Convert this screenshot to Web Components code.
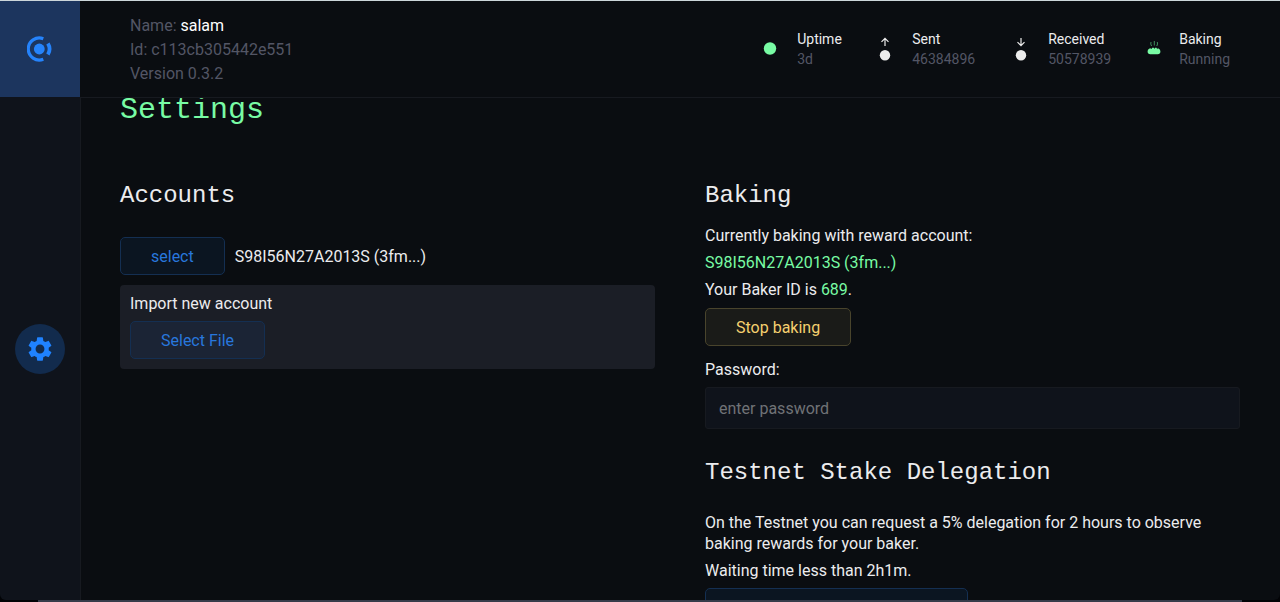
<!DOCTYPE html>
<html lang="en">
<head>
<meta charset="utf-8">
<meta name="viewport" content="width=device-width, initial-scale=1">
<title>Settings</title>
<style>
  :root {
    --bg: #0a0d11;
    --panel: #0f131b;
    --line: #171a20;
    --text: #ececee;
    --muted: #535665;
    --green: #78fba4;
    --blue: #1f82ff;
    --sans: Roboto, "Noto Sans", sans-serif;
    --mono: "Liberation Mono", monospace;
  }
  html { background: #020306; }
  body {
    margin: 0;
    color: var(--text);
    font: 16px/21px var(--sans);
  }
</style>
</head>
<body>
<baker-app>
  <side-bar slot="side"></side-bar>
  <node-header slot="header">
    <node-info name="salam" node-id="c113cb305442e551" version="0.3.2"></node-info>
    <node-stat slot="stats" label="Uptime" value="3d" icon="dot"></node-stat>
    <node-stat slot="stats" label="Sent" value="46384896" icon="up" wide></node-stat>
    <node-stat slot="stats" label="Received" value="50578939" icon="down" wide></node-stat>
    <node-stat slot="stats" label="Baking" value="Running" icon="bread"></node-stat>
  </node-header>
  <settings-page>
    <accounts-panel slot="left"></accounts-panel>
    <baking-panel slot="right"></baking-panel>
    <delegation-panel slot="right"></delegation-panel>
  </settings-page>
</baker-app>

<script>
  function define(name, render) {
    customElements.define(name, class extends HTMLElement {
      constructor() {
        super();
        this.attachShadow({ mode: "open" });
      }
      connectedCallback() {
        const t = document.createElement("template");
        t.innerHTML = render(this);
        this.shadowRoot.replaceChildren(t.content.cloneNode(true));
      }
    });
  }

  const headings = `
    h2 { margin: 0; font: 24px/34px var(--mono); }
    p { margin: 0; }
    .green { color: var(--green); }
  `;

  define("baker-app", () => `
    <style>
      :host { display: flex; flex-direction: column; height: 100vh; }
      .window {
        flex: 1; min-height: 0; overflow: hidden;
        display: grid; grid-template: auto minmax(0, 1fr) / 80px minmax(0, 1fr);
        border-top: 1px solid #ccd6da; border-radius: 0 0 6px 6px;
        background: var(--bg);
      }
      .edge { height: 2px; margin: 0 38px; background: #363c4a; }
      ::slotted([slot="side"]) { grid-row: 1 / 3; }
    </style>
    <div class="window"><slot name="side"></slot><slot name="header"></slot><slot></slot></div>
    <div class="edge"></div>
  `);

  define("side-bar", () => `
    <style>
      :host { display: flex; flex-direction: column; background: var(--panel); }
      .logo {
        display: grid; place-items: center;
        height: 96px; background: #1c355e;
      }
      nav { flex: 1; display: grid; place-items: center; }
      .item {
        display: grid; place-items: center;
        width: 50px; height: 50px; border-radius: 50%; background: #122b4d;
      }
      svg { display: block; }
    </style>
    <a class="logo" href="#" aria-label="Home">
      <svg width="26" height="26" viewBox="0.700 0 26 26" fill="none" stroke="#2583fb">
        <circle cx="13" cy="13" r="5.400" fill="#2583fb" stroke="none"/>
        <path d="M17 2.760A11 11 0 1 0 17 23.240" stroke-width="3.200"/>
        <path d="M21.600 7.500A10.500 10.500 0 0 1 21.600 18.500" stroke-width="3.800"/>
      </svg>
    </a>
    <nav>
      <a class="item" href="#settings" aria-label="Settings">
        <svg width="28" height="28" viewBox="0 0 24 24" fill="#1f82ff">
          <path d="M19.430 12.980c.04-.32.07-.64.07-.98s-.03-.66-.07-.98l2.110-1.650c.19-.15.24-.42.12-.64l-2-3.460c-.12-.22-.39-.3-.61-.22l-2.490 1c-.52-.4-1.080-.73-1.690-.98l-.38-2.650C14.460 2.180 14.250 2 14 2h-4c-.25 0-.46.18-.49.42l-.38 2.650c-.61.25-1.170.59-1.690.98l-2.490-1c-.23-.09-.49 0-.61.22l-2 3.460c-.13.22-.07.49.12.64l2.110 1.650c-.04.32-.07.65-.07.98s.03.66.07.98l-2.110 1.650c-.19.15-.24.42-.12.64l2 3.460c.12.22.39.3.61.22l2.490-1c.52.4 1.080.73 1.690.98l.38 2.650c.03.24.24.42.49.42h4c.25 0 .46-.18.49-.42l.38-2.650c.61-.25 1.170-.59 1.690-.98l2.490 1c.23.09.49 0 .61-.22l2-3.460c.12-.22.07-.49-.12-.64l-2.110-1.650zM12 15.800a3.800 3.800 0 1 1 0-7.600 3.800 3.800 0 0 1 0 7.600z"/>
        </svg>
      </a>
    </nav>
  `);

  define("node-header", () => `
    <style>
      :host {
        display: flex; align-items: center; justify-content: space-between;
        height: 96px; padding: 0 50px;
        border-bottom: 1px solid var(--line);
      }
      .stats { display: flex; gap: 35px; }
    </style>
    <slot></slot>
    <div class="stats"><slot name="stats"></slot></div>
  `);

  define("node-info", el => `
    <style>
      :host { display: block; padding-top: 2px; line-height: 24px; color: var(--muted); }
      b { font-weight: 400; color: #fff; }
    </style>
    <div>Name: <b>${el.getAttribute("name")}</b></div>
    <div>Id: ${el.getAttribute("node-id")}</div>
    <div>Version ${el.getAttribute("version")}</div>
  `);

  const icons = {
    dot: `<svg width="14" height="26" viewBox="0 0 14 26"><circle cx="7" cy="12.500" r="6.200" fill="#78fba4"/></svg>`,
    up: `<svg width="14" height="26" viewBox="0 0 14 26"><path d="M7 10V2.500M3.500 5.800L7 2.300l3.500 3.500" fill="none" stroke="#ececec" stroke-width="1.200"/><circle cx="7" cy="19.300" r="5.200" fill="#ececec"/></svg>`,
    down: `<svg width="14" height="26" viewBox="0 0 14 26"><path d="M7 2V9.500M3.500 6.200L7 9.700l3.500-3.500" fill="none" stroke="#ececec" stroke-width="1.200"/><circle cx="7" cy="19.300" r="5.200" fill="#ececec"/></svg>`,
    bread: `<svg width="9" height="26" viewBox="3 0 9 26"><path d="M3.200 12.200C1.500 12.700.6 14 .6 15.500c0 1.800 1 2.700 2.700 2.700h7.400c1.700 0 2.700-.9 2.700-2.700 0-1.500-.9-2.800-2.600-3.300l-.7 1-.5-1.500H8l-.7 1.300-.5-1.300H5.200l-.7 1.300z" fill="#78fba4"/><path d="M4.600 10Q3.200 8 4 6M7.300 9.500V5M9.800 10Q11 8 10.300 6" stroke="#3f8f5e" fill="none"/></svg>`
  };

  define("node-stat", el => `
    <style>
      :host { display: flex; align-items: center; gap: 20px; font-size: 14px; line-height: 20px; }
      svg { display: block; overflow: visible; }
      dl, dt, dd { margin: 0; }
      dl { min-width: 46px; }
      dd { color: var(--muted); }
      :host([wide]) dl { min-width: 67px; }
    </style>
    ${icons[el.getAttribute("icon")]}
    <dl><dt>${el.getAttribute("label")}</dt><dd>${el.getAttribute("value")}</dd></dl>
  `);

  define("settings-page", () => `
    <style>
      :host { display: block; overflow: hidden; padding: 0 40px 0 39px; border-left: 1px solid var(--line); }
      h1 { margin: -8px 0 49px; font: 30px/40px var(--mono); color: var(--green); }
      .columns { display: grid; grid-template-columns: 1fr 1fr; gap: 50px; }
    </style>
    <h1>Settings</h1>
    <div class="columns">
      <div><slot name="left"></slot></div>
      <div><slot name="right"></slot></div>
    </div>
  `);

  define("action-button", el => `
    <style>
      :host { display: inline-block; }
      button {
        display: block; box-sizing: border-box; height: 38px; width: 100%; padding: 0 30px;
        font: inherit; color: #2877dd; background: rgba(31, 130, 255, .07);
        border: 1px solid #142f52; border-radius: 5px;
      }
      :host([tone="warning"]) button {
        color: #f4d06f; background: #1a1b18; border-color: #49442c;
      }
    </style>
    <button type="button" ${el.hasAttribute("name") ? `aria-label="${el.getAttribute("name")}"` : ""}><slot></slot></button>
  `);

  define("accounts-panel", () => `
    <style>
      ${headings}
      :host { display: block; }
      .current { display: flex; align-items: center; gap: 10px; margin: 24px 0 10px; }
      .import { padding: 8px 10px 10px; border-radius: 4px; background: #1b1e26; }
      .import p { margin-bottom: 7px; }
    </style>
    <h2>Accounts</h2>
    <div class="current"><action-button>select</action-button><span>S98I56N27A2013S (3fm...)</span></div>
    <div class="import"><p>Import new account</p><action-button>Select File</action-button></div>
  `);

  define("baking-panel", () => `
    <style>
      ${headings}
      :host { display: block; }
      h2 { margin-bottom: 12px; }
      p { margin-bottom: 6px; }
      action-button { margin: 2px 0 13px; }
      label { display: block; margin-bottom: 7px; }
      input {
        display: block; box-sizing: border-box; width: 100%; height: 42px; padding: 0 13px;
        font: inherit; color: var(--text); background: var(--panel);
        border: 1px solid var(--line); border-radius: 3px;
      }
      input::placeholder { color: #707276; }
    </style>
    <h2>Baking</h2>
    <p>Currently baking with reward account:</p>
    <p class="green">S98I56N27A2013S (3fm...)</p>
    <p>Your Baker ID is <span class="green">689</span>.</p>
    <action-button tone="warning">Stop baking</action-button>
    <label for="password">Password:</label>
    <input id="password" type="password" placeholder="enter password">
  `);

  define("delegation-panel", () => `
    <style>
      ${headings}
      :host { display: block; margin-top: 27px; }
      h2 { margin-bottom: 22px; }
      p { margin-bottom: 6px; }
      action-button { width: 263px; margin-top: 1px; }
    </style>
    <h2>Testnet Stake Delegation</h2>
    <p>On the Testnet you can request a 5% delegation for 2 hours to observe baking rewards for your baker.</p>
    <p>Waiting time less than 2h1m.</p>
    <action-button name="Request delegation"></action-button>
  `);
</script>
</body>
</html>
